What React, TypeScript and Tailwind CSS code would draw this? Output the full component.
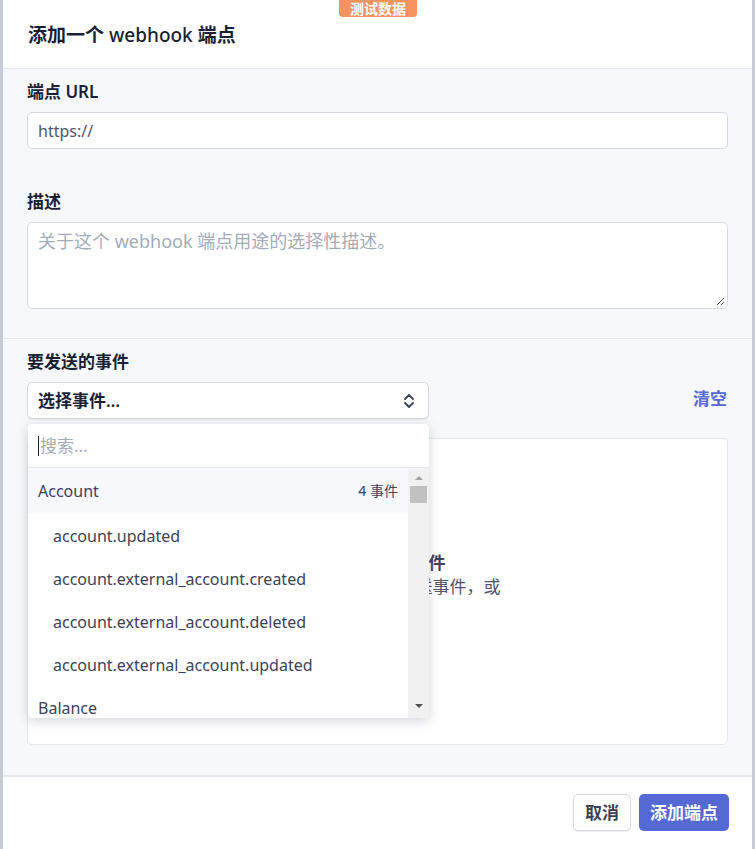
import React from "react";

const font = { fontFamily: '"Noto Sans", "Noto Sans CJK SC", sans-serif' };

function UpDown() {
  return (
    <svg width="12" height="16" viewBox="0 0 12 16" fill="none" stroke="#3c4257" strokeWidth="1.8" strokeLinecap="round" strokeLinejoin="round">
      <path d="M2 6 L6 2 L10 6" />
      <path d="M2 10 L6 14 L10 10" />
    </svg>
  );
}

const events = [
  "account.updated",
  "account.external_account.created",
  "account.external_account.deleted",
  "account.external_account.updated",
];

export default function App() {
  return (
    <div className="flex h-[849px] w-[755px] overflow-hidden bg-[#c7cbd3]" style={font}>
      <div className="relative ml-[3px] flex w-[749px] flex-col bg-white">
        <div className="absolute left-[336px] top-0 rounded-b-[4px] bg-[#f5935f] px-[11px] text-[14px] font-bold leading-[17px] text-white">
          测试数据
        </div>

        <header className="flex h-[69px] items-center border-b border-[#e3e8ee] px-[25px] pt-[2px]">
          <h1 className="text-[19px] font-semibold text-[#1a1f36]">
            添加一个 <span className="font-medium">webhook</span> 端点
          </h1>
        </header>

        <div className="flex flex-1 flex-col bg-[#f6f8fb]">
          <section className="border-b border-[#e3e8ee] px-6 pb-[29px] pt-[13px]">
            <label className="block text-[17px] font-semibold leading-[20px] text-[#1a1f36]">端点 URL</label>
            <div className="mt-[10px] flex h-[37px] items-center rounded-[5px] border border-[#d5dae1] bg-white px-[10px] text-[16px] text-[#4f566b]">
              https://
            </div>
            <label className="mt-[43px] block text-[17px] font-semibold leading-[20px] text-[#1a1f36]">描述</label>
            <div className="relative mt-[10px] h-[87px] rounded-[5px] border border-[#d5dae1] bg-white px-[10px] pt-[5px] text-[18px] text-[#a3acb9]">
              关于这个 webhook 端点用途的选择性描述。
              <svg className="absolute bottom-[2px] right-[2px]" width="9" height="9" viewBox="0 0 9 9" stroke="#555" strokeWidth="1">
                <path d="M8 1 L1 8 M8 5 L5 8" />
              </svg>
            </div>
          </section>

          <section className="relative flex flex-1 flex-col px-6 pb-[30px] pt-[13px]">
            <label className="block text-[17px] font-semibold leading-[20px] text-[#1a1f36]">要发送的事件</label>
            <div className="mt-[10px] flex items-center justify-between">
              <div className="flex h-[37px] w-[402px] items-center justify-between rounded-[5px] border border-[#d5dae1] bg-white pl-[10px] pr-[13px] shadow-[0_1px_1px_rgba(0,0,0,0.08)]">
                <span className="text-[17px] font-semibold text-[#1a1f36]">选择事件…</span>
                <UpDown />
              </div>
              <span className="pb-[3px] pr-[1px] text-[17px] font-semibold text-[#5469d4]">清空</span>
            </div>

            <div className="mt-[19px] flex flex-1 flex-col items-center rounded-[5px] border border-[#e3e8ee] bg-white pt-[112px] text-center">
              <p className="text-[17px] font-semibold leading-[24px] text-[#3c4257]">尚未选择任何事件</p>
              <p className="pl-[8px] text-[17px] leading-[24px] text-[#4f566b]">从上方列表中选要发送事件，或</p>
            </div>

            <div className="absolute left-[25px] top-[85px] flex h-[294px] w-[401px] flex-col overflow-hidden rounded-[4px] bg-white shadow-[0_3px_12px_rgba(60,66,87,0.22)]">
              <div className="flex h-[44px] shrink-0 items-center border-b border-[#e3e8ee] px-[10px]">
                <span className="mr-[1px] h-[20px] w-[1px] bg-[#1a1f36]" />
                <span className="text-[17px] text-[#a3acb9]">搜索...</span>
              </div>
              <div className="flex min-h-0 flex-1">
                <div className="flex-1 overflow-hidden text-[16px] text-[#3c4257]">
                  <div className="flex h-[45px] items-center justify-between bg-[#f6f8fb] pl-[10px] pr-[10px]">
                    <span>Account</span>
                    <span className="text-[14px]">4 事件</span>
                  </div>
                  {events.map((e) => (
                    <div key={e} className="flex h-[43px] items-center pl-[25px] pt-[2px]">
                      {e}
                    </div>
                  ))}
                  <div className="flex h-[43px] items-center pl-[10px] pt-[2px]">Balance</div>
                </div>
                <div className="flex w-[21px] flex-col items-center bg-[#f1f1f1]">
                  <div className="mt-[8px] h-0 w-0 border-x-[4px] border-b-[4px] border-x-transparent border-b-[#a3a3a3]" />
                  <div className="mt-[6px] h-[17px] w-[17px] bg-[#c1c1c1]" />
                  <div className="flex-1" />
                  <div className="mb-[10px] h-0 w-0 border-x-[4px] border-t-[4px] border-x-transparent border-t-[#505050]" />
                </div>
              </div>
            </div>
          </section>
        </div>

        <footer className="flex h-[74px] items-start justify-end gap-[8px] border-t-2 border-[#e3e8ee] bg-white pr-[23px] pt-[17px]">
          <button className="h-[37px] rounded-[5px] border border-[#d5dae1] bg-white px-[11px] text-[17px] font-semibold text-[#3c4257] shadow-[0_1px_1px_rgba(0,0,0,0.08)]">
            取消
          </button>
          <button className="h-[37px] rounded-[5px] bg-[#5469d4] px-[11px] text-[17px] font-semibold text-white">
            添加端点
          </button>
        </footer>
      </div>
      <div className="flex-1 bg-[#c7cbd3]" />
    </div>
  );
}
